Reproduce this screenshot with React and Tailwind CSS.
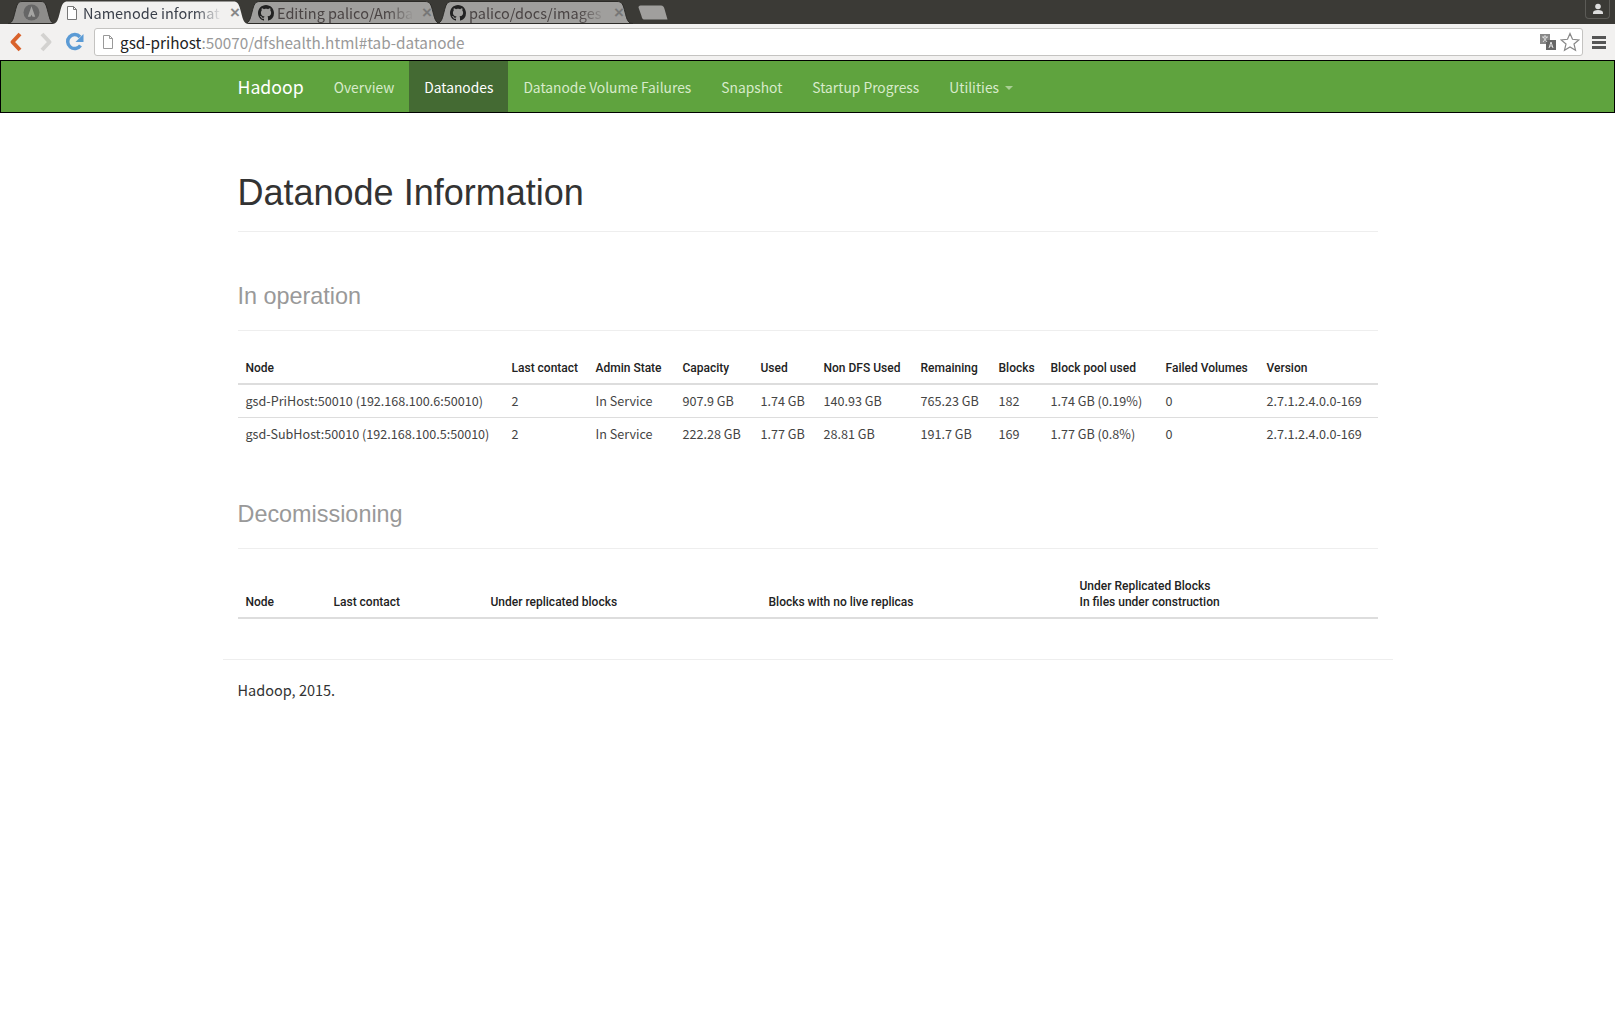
import { Fragment } from 'react';

const sans = 'font-["Liberation_Sans",sans-serif]';
const body = 'font-["Noto_Sans_CJK_KR","Noto_Sans",sans-serif]';
const head = 'font-["Roboto",sans-serif]';

const navItems = ['Overview', 'Datanodes', 'Datanode Volume Failures', 'Snapshot', 'Startup Progress'];

const liveColumns = [
  ['Node', 'w-[266px]'],
  ['Last contact', 'w-[84px]'],
  ['Admin State', 'w-[87px]'],
  ['Capacity', 'w-[78px]'],
  ['Used', 'w-[63px]'],
  ['Non DFS Used', 'w-[97px]'],
  ['Remaining', 'w-[78px]'],
  ['Blocks', 'w-[52px]'],
  ['Block pool used', 'w-[115px]'],
  ['Failed Volumes', 'w-[101px]'],
  ['Version', 'w-[119px]'],
];

const liveRows = [
  ['gsd-PriHost:50010 (192.168.100.6:50010)', '2', 'In Service', '907.9 GB', '1.74 GB', '140.93 GB', '765.23 GB', '182', '1.74 GB (0.19%)', '0', '2.7.1.2.4.0.0-169'],
  ['gsd-SubHost:50010 (192.168.100.5:50010)', '2', 'In Service', '222.28 GB', '1.77 GB', '28.81 GB', '191.7 GB', '169', '1.77 GB (0.8%)', '0', '2.7.1.2.4.0.0-169'],
];

const decomColumns = [
  ['Node', 'w-[88px]'],
  ['Last contact', 'w-[157px]'],
  ['Under replicated blocks', 'w-[278px]'],
  ['Blocks with no live replicas', 'w-[311px]'],
  [['Under Replicated Blocks', 'In files under construction'], 'w-[306px]'],
];

function GithubIcon() {
  return (
    <svg viewBox="0 0 16 16" className="h-4 w-4 shrink-0" fill="#222">
      <path d="M8 0C3.58 0 0 3.58 0 8c0 3.54 2.29 6.53 5.47 7.59.4.07.55-.17.55-.38 0-.19-.01-.82-.01-1.49-2.01.37-2.53-.49-2.69-.94-.09-.23-.48-.94-.82-1.13-.28-.15-.68-.52-.01-.53.63-.01 1.08.58 1.23.82.72 1.21 1.87.87 2.33.66.07-.52.28-.87.51-1.07-1.78-.2-3.64-.89-3.64-3.95 0-.87.31-1.59.82-2.15-.08-.2-.36-1.02.08-2.12 0 0 .67-.21 2.2.82.64-.18 1.32-.27 2-.27s1.36.09 2 .27c1.53-1.04 2.2-.82 2.2-.82.44 1.1.16 1.92.08 2.12.51.56.82 1.27.82 2.15 0 3.07-1.87 3.75-3.65 3.95.29.25.54.73.54 1.48 0 1.07-.01 1.93-.01 2.2 0 .21.15.46.55.38A8 8 0 0 0 16 8c0-4.42-3.58-8-8-8z" />
    </svg>
  );
}

function PageIcon({ color = '#777' }) {
  return (
    <svg viewBox="0 0 12 14" className="h-[14px] w-3 shrink-0" fill="#fff" stroke={color} strokeWidth="1">
      <path d="M1.500.5h6l3 3v10h-9z" />
      <path d="M7.500.5v3h3" fill="none" />
    </svg>
  );
}

function Tab({ active, icon, title }) {
  return (
    <div className={`relative -mr-[5px] flex h-[23px] w-[197px] shrink-0 items-center pl-[14px] pr-[9px] ${active ? 'z-10' : ''}`}>
      <svg viewBox="0 0 197 23" preserveAspectRatio="none" className="absolute inset-0 h-full w-full">
        {active ? (
          <path d="M0 23C5 23 6 19 8 11 10 3 11 .5 16 .5H181C186 .5 187 3 189 11 191 19 192 23 197 23Z" fill="#f2f1f0" />
        ) : (
          <path d="M0 22.500C5 22.500 6 19 8 11 10 3 11 .5 16 .5H181C186 .5 187 3 189 11 191 19 192 22.500 197 22.500Z" fill="#a09f9d" stroke="#2c2b28" />
        )}
      </svg>
      <div className="relative flex min-w-0 flex-1 items-center gap-[3px]">
        {icon}
        <span className={`${body} min-w-0 flex-1 whitespace-nowrap text-[14.500px] leading-[20px] [mask-image:linear-gradient(to_right,#000_80%,transparent_100%)] ${active ? 'text-[#3a3f4a]' : 'text-[#4a4444]'}`}>
          {title}
        </span>
        <span className={`${sans} ml-[5px] text-[17px] font-bold leading-none ${active ? 'text-[#888]' : 'text-[#777]'}`}>×</span>
      </div>
    </div>
  );
}

function TabBar() {
  return (
    <div className="flex h-6 items-end bg-[#3b3a36] pl-[8px]">
      <div className="relative mr-[-3px] flex h-[23px] w-[47px] shrink-0 items-center justify-center">
        <svg viewBox="0 0 47 23" preserveAspectRatio="none" className="absolute inset-0 h-full w-full">
          <path d="M0 22.500C4 22.500 5 19 7 11 9 3 10 .5 14 .5H33C37 .5 38 3 40 11 42 19 43 22.500 47 22.500Z" fill="#8d8c8a" stroke="#2c2b28" />
        </svg>
        <svg viewBox="0 0 16 16" className="relative h-[17px] w-[17px]" fill="#666">
          <circle cx="8" cy="8" r="7.500" />
          <path d="M8 2 11.500 12H9L8 10 7 12H4.500Z" fill="#a5a5a3" />
        </svg>
      </div>
      <Tab active icon={<span className="flex w-[14px] shrink-0"><PageIcon /></span>} title="Namenode informat" />
      <Tab icon={<GithubIcon />} title="Editing palico/Amba" />
      <Tab icon={<GithubIcon />} title="palico/docs/images" />
      <svg viewBox="0 0 30 15" className="mb-[4px] ml-[10px] h-[15px] w-[30px] shrink-0">
        <path d="M2.500.5H23C25 .5 26 2 26.500 4L29.500 14.500H6C4.500 14.500 4 13 3.500 11L.5 2.500C.5 1.500 1 .5 2.500.5Z" fill="#a09f9d" />
      </svg>
      <div className="ml-auto mr-[5px] flex h-[19px] w-[25px] items-center justify-center self-start rounded-b-[4px] border border-t-0 border-[#5c5b57]">
        <svg viewBox="0 0 12 12" className="h-3 w-3" fill="#ddd">
          <circle cx="6" cy="3.500" r="2.800" />
          <path d="M1 11V9.500C1 8 3 7 6 7s5 1 5 2.500V11Z" />
        </svg>
      </div>
    </div>
  );
}

function Toolbar() {
  return (
    <div className="flex h-[36px] items-center bg-[#f2f1f0] pl-[9px] pr-[9px]">
      <svg viewBox="0 0 14 20" className="h-5 w-[14px] shrink-0">
        <path d="M11 2 3.500 10l7.500 8" fill="none" stroke="#d9622b" strokeWidth="4" strokeLinejoin="round" />
      </svg>
      <svg viewBox="0 0 14 20" className="ml-[16px] h-5 w-[14px] shrink-0">
        <path d="M3 2l7.500 8-7.500 8" fill="none" stroke="#d3d2d0" strokeWidth="4" strokeLinejoin="round" />
      </svg>
      <svg viewBox="0 0 20 20" className="ml-[12px] h-5 w-5 shrink-0">
        <path d="M15.500 13.500A7 7 0 1 1 15 5" fill="none" stroke="#5b9bd5" strokeWidth="3.500" />
        <path d="M18.500 2v8h-8z" fill="#5b9bd5" />
      </svg>
      <div className="ml-[9px] flex h-[28px] flex-1 items-center rounded-[3px] border border-[#c4c3c1] bg-white pl-[7px] pr-[2px]">
        <PageIcon color="#999" />
        <div className={`${body} ml-[6px] -mt-[1px] text-[15.300px] leading-[20px] text-[#999]`}>
          <span className="text-[#222]">gsd-prihost</span>:50070/dfshealth.html#tab-datanode
        </div>
        <svg viewBox="0 0 16 16" className="ml-auto h-4 w-4 shrink-0">
          <rect x="0" y="0" width="10" height="10" fill="#888" />
          <rect x="6" y="6" width="10" height="10" fill="#666" />
          <path d="M2 3h6M5 1v2M3 8l4-5M3 3l4 5" stroke="#eee" strokeWidth=".8" />
          <path d="M9 14l2-6 2 6M10 12h2" stroke="#eee" fill="none" strokeWidth=".9" />
        </svg>
        <svg viewBox="0 0 20 20" className="ml-[4px] h-5 w-5 shrink-0">
          <path d="M10 1.500l2.500 5.800 6.300.6-4.800 4.100 1.500 6.200-5.500-3.300-5.500 3.300 1.500-6.200L1.200 7.900l6.300-.6z" fill="#fff" stroke="#888" strokeWidth="1.200" />
        </svg>
      </div>
      <div className="ml-[9px] flex w-[14px] shrink-0 flex-col gap-[2px]">
        <div className="h-[3px] bg-[#555]" />
        <div className="h-[3px] bg-[#555]" />
        <div className="h-[3px] bg-[#555]" />
      </div>
    </div>
  );
}

function Navbar() {
  return (
    <nav className={`${body} h-[53px] border border-black bg-[#5fa33e] text-[13.800px]`}>
      <div className="mx-auto flex h-full w-[1170px] items-stretch pl-[15px]">
        <a className="mr-[15px] flex items-center text-[17.700px] text-white">Hadoop</a>
        {navItems.map((item) => (
          <a
            key={item}
            className={`flex items-center px-[15px] pt-[1px] ${item === 'Datanodes' ? 'bg-[#446a33] text-white' : 'text-[#d8ebcb]'}`}
          >
            {item}
          </a>
        ))}
        <a className="flex items-center px-[15px] pt-[1px] text-[#d8ebcb]">
          Utilities
          <span className="ml-[6px] mt-[2px] h-0 w-0 border-x-[4px] border-t-[4px] border-x-transparent border-t-[#a9cf94]" />
        </a>
      </div>
    </nav>
  );
}

function SectionTitle({ children }) {
  return (
    <div className={`${sans} mt-[51px] h-[48px] border-b border-[#eeeeee] text-[23.400px] leading-[26px] text-[#999]`}>
      {children}
    </div>
  );
}

function HeaderCell({ label, width }) {
  return (
    <th className={`${head} ${width} border-b-2 border-[#dddddd] px-2 pb-[7px] pt-[8px] text-left align-bottom text-[12px] font-medium leading-[16px] text-[#222]`}>
      {Array.isArray(label)
        ? label.map((line, i) => (
            <Fragment key={line}>
              {i > 0 && <br />}
              {line}
            </Fragment>
          ))
        : label}
    </th>
  );
}

export default function App() {
  return (
    <div className="min-h-[1026px] bg-white">
      <TabBar />
      <Toolbar />
      <Navbar />
      <main className="mx-auto w-[1170px] px-[15px]">
        <div className={`${sans} mt-[60px] h-[59px] border-b border-[#eeeeee] text-[36px] leading-[40px] text-[#333]`}>
          Datanode Information
        </div>
        <SectionTitle>In operation</SectionTitle>
        <table className={`${body} mt-[21px] w-full table-fixed border-collapse`}>
          <thead>
            <tr>
              {liveColumns.map(([label, width]) => (
                <HeaderCell key={label} label={label} width={width} />
              ))}
            </tr>
          </thead>
          <tbody>
            {liveRows.map((row) => (
              <tr key={row[0]} className="border-b border-[#dddddd] last:border-b-0">
                {row.map((cell, i) => (
                  <td key={i} className="whitespace-nowrap px-2 pb-[8px] pt-[7px] text-[12.600px] leading-[17px] text-[#444]">
                    {cell}
                  </td>
                ))}
              </tr>
            ))}
          </tbody>
        </table>
        <SectionTitle>Decomissioning</SectionTitle>
        <table className={`${body} mt-[21px] w-full table-fixed border-collapse`}>
          <thead>
            <tr>
              {decomColumns.map(([label, width]) => (
                <HeaderCell key={width} label={label} width={width} />
              ))}
            </tr>
          </thead>
        </table>
      </main>
      <footer className="mx-auto mt-[40px] w-[1170px] border-t border-[#eeeeee] px-[15px] pt-[20px]">
        <p className={`${body} text-[14.500px] leading-[20px] text-[#333]`}>Hadoop, 2015.</p>
      </footer>
    </div>
  );
}
